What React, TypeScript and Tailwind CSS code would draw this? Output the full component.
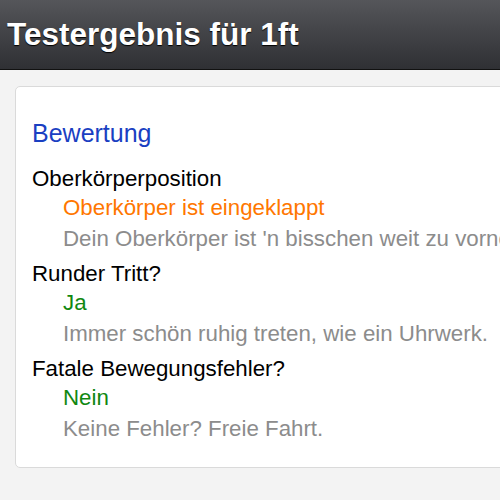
import React from 'react';

const items = [
    { title: 'Oberkörperposition', value: 'Oberkörper ist eingeklappt', color: 'text-[#ff7700]', note: "Dein Oberkörper ist 'n bisschen weit zu vorne." },
    { title: 'Runder Tritt?', value: 'Ja', color: 'text-[#118811]', note: 'Immer schön ruhig treten, wie ein Uhrwerk.' },
    { title: 'Fatale Bewegungsfehler?', value: 'Nein', color: 'text-[#118811]', note: 'Keine Fehler? Freie Fahrt.' },
];

const App: React.FC = () => {
    return (
        <div className="w-[500px] h-[500px] overflow-hidden bg-[#f3f3f3] font-['Liberation_Sans',Arial,sans-serif]">
            <div className="h-[70px] bg-gradient-to-b from-[#55565a] to-[#2f3034] border-b border-[#111] flex items-center px-[7px]">
                <h1 className="text-[31.5px] font-bold text-white whitespace-nowrap [text-shadow:0_1px_1px_#000]">Testergebnis für 1ft</h1>
            </div>

            <div className="ml-[15px] mt-[16px] w-[560px] bg-white border border-[#dadada] rounded-[5px] pt-[31px] pb-[16px] pl-[16px]">
                <h2 className="text-[25px] leading-[30px] text-[#1a3fc2] mb-[18px]">Bewertung</h2>
                {items.map((item, index) => (
                    <div key={index} className="mb-[6px] whitespace-nowrap">
                        <div className="text-[22.3px] leading-[26px] text-black">{item.title}</div>
                        <div className="pl-[31px]">
                            <div className={`text-[22.3px] leading-[31px] ${item.color}`}>{item.value}</div>
                            <div className="text-[22.3px] leading-[32px] text-[#8c8c8c]">{item.note}</div>
                        </div>
                    </div>
                ))}
            </div>
        </div>
    );
};

export default App;
